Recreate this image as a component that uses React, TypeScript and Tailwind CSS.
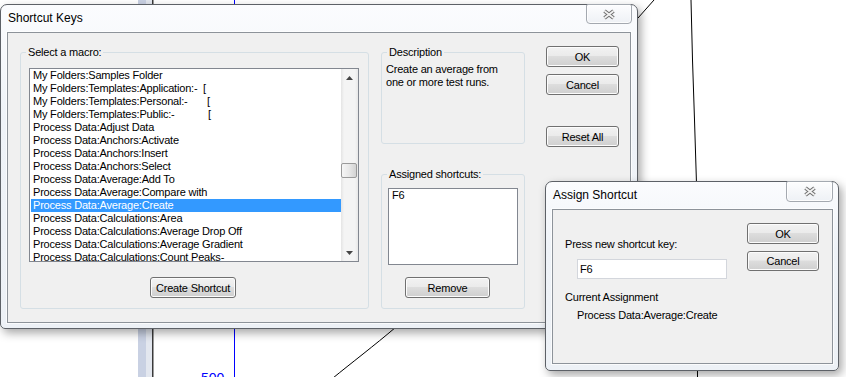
import type { ReactNode } from "react";

const MACROS: { text: string; tab?: string }[] = [
  { text: "My Folders:Samples Folder" },
  { text: "My Folders:Templates:Application:-", tab: "w-[170px]" },
  { text: "My Folders:Templates:Personal:-", tab: "w-[174px]" },
  { text: "My Folders:Templates:Public:-", tab: "w-[175px]" },
  { text: "Process Data:Adjust Data" },
  { text: "Process Data:Anchors:Activate" },
  { text: "Process Data:Anchors:Insert" },
  { text: "Process Data:Anchors:Select" },
  { text: "Process Data:Average:Add To" },
  { text: "Process Data:Average:Compare with" },
  { text: "Process Data:Average:Create" },
  { text: "Process Data:Calculations:Area" },
  { text: "Process Data:Calculations:Average Drop Off" },
  { text: "Process Data:Calculations:Average Gradient" },
  { text: "Process Data:Calculations:Count Peaks-" },
];

const SELECTED = 10;

function CloseButton({ className }: { className: string }) {
  return (
    <div
      className={`-mt-px flex items-center justify-center rounded-b-[4px] rounded-t-[2px] border border-[#a4a9b0] bg-[linear-gradient(to_bottom,#fdfdfe,#eef1f5)] shadow-[inset_0_0_0_1px_rgba(255,255,255,0.8)] ${className}`}
    >
      <svg width="14" height="11" viewBox="0 0 14 11">
        <path d="M2.5 2 L11.5 9 M11.5 2 L2.5 9" stroke="#727272" strokeWidth="3.8" />
        <path d="M2.5 2 L11.5 9 M11.5 2 L2.5 9" stroke="#f4f4f4" strokeWidth="1.6" />
      </svg>
    </div>
  );
}

function Window({
  title,
  className,
  closeClass,
  clientClass,
  children,
}: {
  title: string;
  className: string;
  closeClass: string;
  clientClass: string;
  children: ReactNode;
}) {
  return (
    <div
      className={`absolute flex flex-col rounded-b-[5px] rounded-t-[7px] border border-[#5d6167] bg-[linear-gradient(to_bottom,#fbfcfe,#eff3f8_35%,#edf1f6)] shadow-[3px_4px_10px_rgba(0,0,0,0.35)] ${className}`}
    >
      <div className="flex h-[27px] shrink-0 items-start justify-between pl-[7px] pr-[5px]">
        <span className="pt-[6px] text-[12px] leading-[15px] tracking-normal">{title}</span>
        <CloseButton className={closeClass} />
      </div>
      <div
        className={`shrink-0 border border-[#8d939a] bg-[#f0f0f0] shadow-[0_0_0_1px_rgba(255,255,255,0.7)] ${clientClass}`}
      >
        {children}
      </div>
    </div>
  );
}

function WinButton({ children, className }: { children: ReactNode; className: string }) {
  return (
    <button
      type="button"
      className={`flex items-center justify-center rounded-[3px] border border-[#707070] bg-[linear-gradient(to_bottom,#f2f2f2,#ebebeb_45%,#dddddd_50%,#cfcfcf)] pt-px leading-[13px] shadow-[inset_0_0_0_1px_#fcfcfc] ${className}`}
    >
      {children}
    </button>
  );
}

function GroupBox({
  label,
  className,
  children,
}: {
  label: string;
  className: string;
  children: ReactNode;
}) {
  return (
    <div className={`relative flex flex-col items-start rounded-[3px] border border-[#d5dfe5] ${className}`}>
      <span className="absolute -top-[7px] left-[5px] bg-[#f0f0f0] px-[2px] leading-[13px]">{label}</span>
      {children}
    </div>
  );
}

function Arrow({ up }: { up?: boolean }) {
  return (
    <div className="flex h-[17px] items-center justify-center">
      <svg width="7" height="4" viewBox="0 0 7 4">
        <path d={up ? "M3.5 0 L7 4 L0 4 Z" : "M0 0 L7 0 L3.5 4 Z"} fill="#444" />
      </svg>
    </div>
  );
}

function MacroList() {
  return (
    <div className="ml-[8px] mt-[15px] flex h-[194px] w-[330px] border border-[#828790] bg-white">
      <div className="w-[311px] overflow-hidden pl-px">
        {MACROS.map((m, i) => (
          <div
            key={m.text}
            className={`h-[13px] whitespace-nowrap pl-[2px] leading-[13px] ${
              i === SELECTED ? "bg-[#3399ff] text-white" : ""
            }`}
          >
            {m.tab ? (
              <>
                <span className={`inline-block ${m.tab}`}>{m.text}</span>[
              </>
            ) : (
              m.text
            )}
          </div>
        ))}
      </div>
      <div className="flex w-[17px] flex-col bg-[linear-gradient(to_right,#e4e4e4,#f4f4f4_18%,#f4f4f4_82%,#e8e8e8)]">
        <Arrow up />
        <div className="flex-1">
          <div className="mt-[77px] h-[15px] w-[16px] rounded-[2px] border border-[#9a9a9a] bg-[linear-gradient(to_right,#f6f6f6,#e8e8e8_50%,#d3d3d3)]" />
        </div>
        <Arrow />
      </div>
    </div>
  );
}

function Backdrop() {
  return (
    <>
      <svg className="absolute inset-0" width="846" height="377" viewBox="0 0 846 377">
        <rect x="138" y="0" width="8" height="377" fill="#c9d1e3" />
        <rect x="146" y="0" width="6" height="377" fill="#e3e7ef" />
        <rect x="152" y="0" width="1.5" height="377" fill="#3a3a3a" />
        <line x1="234.5" y1="0" x2="234.5" y2="377" stroke="#0000ff" />
        <path d="M333 378 C350 364 375 345 396 327" stroke="#000" fill="none" />
        <path d="M638 18 L654 0" stroke="#000" fill="none" />
        <path d="M691 0 L692.5 60 L694.5 120 L697 200 L697.5 377" stroke="#000" fill="none" />
      </svg>
      <span className="absolute left-[201px] top-[371px] text-[14px] leading-none tracking-normal text-[#0000ff]">
        500
      </span>
    </>
  );
}

export default function App() {
  return (
    <div className="relative h-[377px] w-[846px] overflow-hidden bg-white font-['Liberation_Sans',Arial,sans-serif] text-[11px] tracking-[-0.2px] text-black">
      <Backdrop />

      <Window
        title="Shortcut Keys"
        className="left-0 top-[4px] h-[325px] w-[638px]"
        closeClass="h-[20px] w-[46px]"
        clientClass="mx-[6px] h-[291px]"
      >
        <div className="flex items-start pl-[12px] pt-[13px]">
          <GroupBox label="Select a macro:" className="mt-[6px] h-[257px] w-[349px]">
            <MacroList />
            <WinButton className="ml-[129px] mt-[15px] h-[21px] w-[86px]">Create Shortcut</WinButton>
          </GroupBox>

          <div className="ml-[12px] mt-[6px] flex flex-col">
            <GroupBox label="Description" className="h-[92px] w-[144px]">
              <p className="ml-[4px] mt-[10px] leading-[13px]">
                Create an average from
                <br />
                one or more test runs.
              </p>
            </GroupBox>
            <GroupBox label="Assigned shortcuts:" className="mt-[30px] h-[135px] w-[144px]">
              <div className="ml-[6px] mt-[13px] h-[77px] w-[130px] border border-[#828790] bg-white pl-[3px] leading-[13px]">
                F6
              </div>
              <WinButton className="ml-[23px] mt-[12px] h-[21px] w-[85px]">Remove</WinButton>
            </GroupBox>
          </div>

          <div className="ml-[21px] flex flex-col">
            <WinButton className="h-[21px] w-[73px]">OK</WinButton>
            <WinButton className="mt-[7px] h-[21px] w-[73px]">Cancel</WinButton>
            <WinButton className="mt-[31px] h-[21px] w-[73px]">Reset All</WinButton>
          </div>
        </div>
      </Window>

      <Window
        title="Assign Shortcut"
        className="left-[545px] top-[181px] h-[190px] w-[294px]"
        closeClass="h-[21px] w-[47px]"
        clientClass="ml-[6px] mr-[5px] h-[155px]"
      >
        <div className="flex items-start">
          <div className="flex w-[174px] flex-col items-start pl-[12px] pt-[28px]">
            <span className="leading-[13px]">Press new shortcut key:</span>
            <div className="ml-[12px] mt-[8px] h-[20px] w-[150px] border border-[#d3d6dc] bg-white pl-[2px] leading-[18px]">
              F6
            </div>
            <span className="mt-[12px] leading-[13px]">Current Assignment</span>
            <span className="ml-[12px] mt-[5px] leading-[13px]">Process Data:Average:Create</span>
          </div>
          <div className="ml-[20px] flex flex-col pt-[13px]">
            <WinButton className="h-[21px] w-[72px]">OK</WinButton>
            <WinButton className="mt-[7px] h-[20px] w-[72px]">Cancel</WinButton>
          </div>
        </div>
      </Window>
    </div>
  );
}
